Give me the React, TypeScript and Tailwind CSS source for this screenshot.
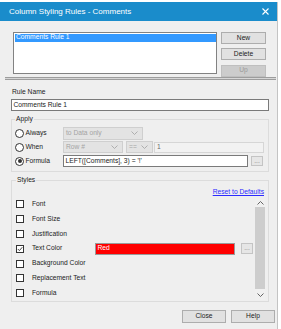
import React from "react"

const Chevron = ({ up = false, color = "#a8a8a8" }: { up?: boolean; color?: string }) => (
  <svg width="7" height="4" viewBox="0 0 7 4" className="shrink-0">
    <path d={up ? "M0.5 3.5 L3.5 0.5 L6.5 3.5" : "M0.5 0.5 L3.5 3.5 L6.5 0.5"} fill="none" stroke={color} strokeWidth="0.9" />
  </svg>
)

function Combo({ text, className }: { text: string; className: string }) {
  return (
    <div className={`flex items-center justify-between pl-[2px] pr-[4px] bg-[#e3e3e3] border border-[#cfcfcf] text-[#a3a3a3] ${className}`}>
      <span>{text}</span>
      <Chevron />
    </div>
  )
}

function Radio({ label, checked = false }: { label: string; checked?: boolean }) {
  return (
    <div className="w-[48px] flex items-center gap-[1.5px]">
      <div className="w-[9px] h-[9px] rounded-full border border-[#333] bg-white flex items-center justify-center">
        {checked && <div className="w-[4px] h-[4px] rounded-full bg-[#333]" />}
      </div>
      <span>{label}</span>
    </div>
  )
}

function Check({ label, checked = false, children }: { label: string; checked?: boolean; children?: React.ReactNode }) {
  return (
    <div className="h-[14.8px] flex items-center pl-[4px]">
      <div className="w-[8px] h-[8px] border border-[#333] bg-white flex items-center justify-center">
        {checked && (
          <svg width="6" height="6" viewBox="0 0 6 6">
            <path d="M0.8 3 L2.4 4.6 L5.3 1.2" fill="none" stroke="#333" strokeWidth="0.9" />
          </svg>
        )}
      </div>
      <span className="ml-[8px] w-[63px] whitespace-nowrap">{label}</span>
      {children}
    </div>
  )
}

function Btn({ label, className = "", disabled = false }: { label: string; className?: string; disabled?: boolean }) {
  return (
    <div
      className={`flex items-center justify-center border ${
        disabled ? "bg-[#cccccc] border-[#bfbfbf] text-[#9a9a9a]" : "bg-[#e1e1e1] border-[#adadad] text-[#222]"
      } ${className}`}
    >
      {label}
    </div>
  )
}

export default function App() {
  const styles = ["Font", "Font Size", "Justification"]
  const stylesAfter = ["Background Color", "Replacement Text", "Formula"]

  return (
    <div className="w-[281px] h-[329px] bg-white overflow-hidden font-['Liberation_Sans',Arial,sans-serif] text-[6.7px] leading-none text-[#222]">
      <div className="h-[2px] bg-white" />
      <div className="w-[278px] h-[327px] bg-[#efefef] border-r border-[#c4c4c4] flex flex-col">
        {/* Title bar */}
        <div className="h-[19px] bg-[#1a8ccb] text-white text-[8px] flex items-center justify-between pl-[9px] pr-[8px]">
          <span>Column Styling Rules - Comments</span>
          <svg width="7" height="7" viewBox="0 0 7 7">
            <path d="M0.5 0.5 L6.5 6.5 M6.5 0.5 L0.5 6.5" stroke="#fff" strokeWidth="1.1" />
          </svg>
        </div>

        {/* Rule list */}
        <div className="h-[56px] overflow-hidden flex pl-[13px] pt-[11px] gap-[4px]">
          <div className="w-[204px] h-[42px] border border-[#828282] bg-white p-[0.5px]">
            <div className="h-[8px] bg-[#3399ff] text-white flex items-center pl-[1.5px]">Comments Rule 1</div>
          </div>
          <div className="w-[45px] flex flex-col">
            <Btn label="New" className="h-[14px]" />
            <Btn label="Delete" className="h-[13px] mt-[4px]" />
            <Btn label="Up" className="h-[14px] mt-[5px]" disabled />
          </div>
        </div>

        {/* Splitter */}
        <div className="ml-[5px] w-[271px] h-[3px] border-y border-[#9d9d9d] bg-[#d6d6d6]" />

        {/* Rule name */}
        <div className="mt-[8px] h-[8px] leading-[8px] pl-[12px]">Rule Name</div>
        <div className="mt-[3px] ml-[11px] w-[258px] h-[12px] border border-[#7a7a7a] bg-white flex items-center pl-[1.5px]">
          Comments Rule 1
        </div>

        {/* Apply */}
        <div className="relative mt-[8px] ml-[11px] w-[258px] h-[53px] border border-[#dcdcdc] pt-[6px] pl-[3px]">
          <span className="absolute -top-[4px] left-[3px] px-[1px] bg-[#efefef]">Apply</span>
          <div className="h-[14px] flex items-center">
            <Radio label="Always" />
            <Combo text="to Data only" className="w-[80px] h-[13px]" />
          </div>
          <div className="h-[14px] flex items-center">
            <Radio label="When" />
            <Combo text="Row #" className="w-[60px] h-[12px]" />
            <Combo text="==" className="w-[27px] h-[12px] ml-[3px]" />
            <div className="ml-[1px] w-[110px] h-[11px] border border-[#d6d6d6] bg-[#f2f2f2] text-[#6a6a6a] flex items-center pl-[2px]">1</div>
          </div>
          <div className="h-[14px] flex items-center">
            <Radio label="Formula" checked />
            <div className="w-[185px] h-[12px] border border-[#7a7a7a] bg-white flex items-center pl-[1.5px]">
              LEFT([Comments], 3) = '!'
            </div>
            <div className="ml-[3px] w-[12px] h-[10px] border border-[#c4c4c4] bg-[#e6e6e6] text-[#8a8a8a] flex items-center justify-center">
              ...
            </div>
          </div>
        </div>

        {/* Styles */}
        <div className="relative mt-[8px] ml-[11px] w-[258px] h-[122px] border border-[#dcdcdc]">
          <span className="absolute -top-[4px] left-[4px] px-[1px] bg-[#efefef]">Styles</span>
          <div className="mt-[7px] h-[8px] leading-[8px] flex justify-end pr-[4px]">
            <span className="text-[#2b2bff] underline">Reset to Defaults</span>
          </div>
          <div className="mt-[1px] h-[104px] flex">
            <div className="flex-1">
              {styles.map((s) => (
                <Check key={s} label={s} />
              ))}
              <Check label="Text Color" checked>
                <div className="w-[140px] h-[12px] border border-[#9a9a9a] bg-[#ff0000] text-white flex items-center pl-[1.5px]">
                  Red
                </div>
                <div className="ml-[6px] w-[12px] h-[11px] border border-[#c4c4c4] bg-[#e6e6e6] text-[#8a8a8a] flex items-center justify-center">
                  ...
                </div>
              </Check>
              {stylesAfter.map((s) => (
                <Check key={s} label={s} />
              ))}
            </div>
            <div className="mt-[2px] mr-[3px] w-[10px] h-[101px] bg-[#f0f0f0] flex flex-col">
              <div className="h-[8px] flex items-center justify-center">
                <Chevron up color="#555" />
              </div>
              <div className="flex-1 bg-[#cdcdcd]" />
              <div className="h-[11px] flex items-center justify-center">
                <Chevron color="#555" />
              </div>
            </div>
          </div>
        </div>

        {/* Footer buttons */}
        <div className="mt-[8px] flex justify-end gap-[5px] pr-[2px]">
          <Btn label="Close" className="w-[44px] h-[13px]" />
          <Btn label="Help" className="w-[44px] h-[13px]" />
        </div>
      </div>
    </div>
  )
}
